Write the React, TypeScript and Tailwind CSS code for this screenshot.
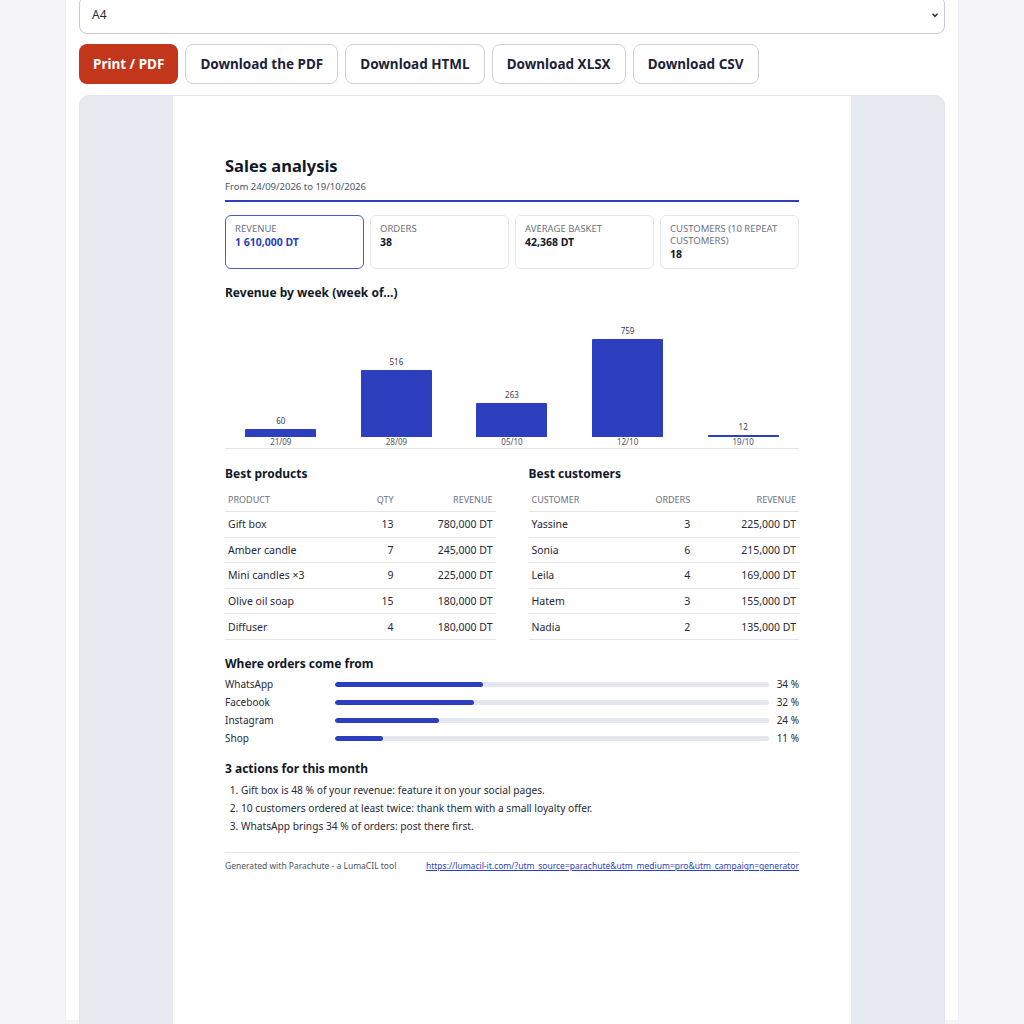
import React from "react";

const weeks = [
  { v: 60, d: "21/09" },
  { v: 516, d: "28/09" },
  { v: 263, d: "05/10" },
  { v: 759, d: "12/10" },
  { v: 12, d: "19/10" },
];

const products = [
  ["Gift box", "13", "780,000 DT"],
  ["Amber candle", "7", "245,000 DT"],
  ["Mini candles ×3", "9", "225,000 DT"],
  ["Olive oil soap", "15", "180,000 DT"],
  ["Diffuser", "4", "180,000 DT"],
];

const customers = [
  ["Yassine", "3", "225,000 DT"],
  ["Sonia", "6", "215,000 DT"],
  ["Leila", "4", "169,000 DT"],
  ["Hatem", "3", "155,000 DT"],
  ["Nadia", "2", "135,000 DT"],
];

const sources = [
  ["WhatsApp", 34],
  ["Facebook", 32],
  ["Instagram", 24],
  ["Shop", 11],
] as const;

function Table({ title, cols, rows }: { title: string; cols: string[]; rows: string[][] }) {
  return (
    <div className="flex-1">
      <h3 className="text-[12px] font-bold text-[#111827] leading-[16px]">{title}</h3>
      <table className="w-full mt-[12px] text-[10.5px] text-[#1f2937] border-collapse">
        <thead>
          <tr className="border-b border-[#e5e7eb]">
            <th className="text-left font-normal text-[9px] text-[#6b7280] uppercase px-[3px] pb-[5px] leading-[12px]">{cols[0]}</th>
            <th className="text-right font-normal text-[9px] text-[#6b7280] uppercase px-[3px] pb-[5px] leading-[12px]">{cols[1]}</th>
            <th className="text-right font-normal text-[9px] text-[#6b7280] uppercase px-[3px] pb-[5px] leading-[12px]">{cols[2]}</th>
          </tr>
        </thead>
        <tbody>
          {rows.map((r) => (
            <tr key={r[0]} className="border-b border-[#e5e7eb]">
              <td className="text-left px-[3px] h-[25.6px] leading-[14px]">{r[0]}</td>
              <td className="text-right px-[3px] h-[25.6px] leading-[14px]">{r[1]}</td>
              <td className="text-right px-[3px] h-[25.6px] leading-[14px]">{r[2]}</td>
            </tr>
          ))}
        </tbody>
      </table>
    </div>
  );
}

export default function App() {
  return (
    <div className="min-h-[1024px] bg-[#f5f5f7] font-['Noto_Sans',sans-serif] overflow-hidden h-[1024px]">
      <div className="ml-[65px] w-[894px] bg-white border-x border-[#ececf0] h-full px-[13px]">
        <div className="-mt-[4px] h-[38px] rounded-[8px] border border-[#c9c9d3] bg-white flex items-center justify-between pl-[12px] pr-[4px] text-[12px] text-[#1f2937]">
          <span>A4</span>
          <svg width="10" height="10" viewBox="0 0 10 10"><path d="M2.5 3.8 L5 6.3 L7.5 3.8" stroke="#333" strokeWidth="1.6" fill="none" /></svg>
        </div>
        <div className="flex gap-[7px] mt-[10px]">
          <button className="h-[40px] px-[14px] rounded-[8px] bg-[#c2361b] text-white text-[13.5px] font-bold">Print / PDF</button>
          {["Download the PDF", "Download HTML", "Download XLSX", "Download CSV"].map((b) => (
            <button key={b} className="h-[40px] px-[14px] rounded-[8px] bg-white border border-[#cfd0da] text-[#1c1f3a] text-[13.5px] font-bold">{b}</button>
          ))}
        </div>
        <div className="mt-[11px] rounded-[10px] bg-[#e8eaf2] border border-[#e2e4ec] flex justify-center h-[940px] overflow-hidden">
          <div className="w-[678px] bg-white px-[52px] pt-[59px]">
            <h1 className="text-[16.5px] font-bold text-[#111827] leading-[22px]">Sales analysis</h1>
            <p className="text-[9.5px] text-[#4b5563] mt-[3px] leading-[14px]">From 24/09/2026 to 19/10/2026</p>
            <div className="h-[2px] bg-[#2b3fbf] mt-[6px]" />
            <div className="grid grid-cols-4 gap-[6px] mt-[13px]">
              {[
                ["Revenue", "1 610,000 DT", true],
                ["Orders", "38", false],
                ["Average basket", "42,368 DT", false],
                ["Customers (10 repeat customers)", "18", false],
              ].map(([l, v, hi]) => (
                <div key={l as string} className={`h-[54px] rounded-[6px] border px-[9px] pt-[7px] ${hi ? "border-[#4a5bd0]" : "border-[#e5e7eb]"}`}>
                  <div className="text-[9.5px] uppercase text-[#6b7280] leading-[12px]">{l}</div>
                  <div className={`text-[10.5px] font-bold leading-[14px] ${hi ? "text-[#2b3fbf]" : "text-[#111827]"}`}>{v}</div>
                </div>
              ))}
            </div>
            <h3 className="text-[12px] font-bold text-[#111827] mt-[16px] leading-[16px]">Revenue by week (week of…)</h3>
            <div className="mt-[18px] border-b border-[#e5e7eb]">
              <div className="h-[129px] flex -mx-[2px]">
                {weeks.map((w) => (
                  <div key={w.d} className="flex-1 flex flex-col items-center justify-end pb-[1px]">
                    <div className="text-[8px] text-[#374151] leading-[10px] mb-[3px]">{w.v}</div>
                    <div className="w-[71px] bg-[#2b3fbf] rounded-t-[1px]" style={{ height: `${(w.v / 759) * 98}px`, minHeight: 2 }} />
                    <div className="text-[8px] text-[#4b5563] leading-[10px]">{w.d}</div>
                  </div>
                ))}
              </div>
            </div>
            <div className="flex gap-[33px] mt-[17px]">
              <Table title="Best products" cols={["Product", "Qty", "Revenue"]} rows={products} />
              <Table title="Best customers" cols={["Customer", "Orders", "Revenue"]} rows={customers} />
            </div>
            <h3 className="text-[12px] font-bold text-[#111827] mt-[16px] leading-[16px]">Where orders come from</h3>
            <div className="mt-[4px] flex flex-col">
              {sources.map(([n, p]) => (
                <div key={n} className="flex items-center h-[18px] text-[10px] text-[#1f2937]">
                  <div className="w-[110px]">{n}</div>
                  <div className="flex-1 h-[5px] rounded-full bg-[#e5e7ef] overflow-hidden">
                    <div className="h-full bg-[#2b3fbf] rounded-full" style={{ width: `${p}%` }} />
                  </div>
                  <div className="w-[30px] text-right">{p} %</div>
                </div>
              ))}
            </div>
            <h3 className="text-[12px] font-bold text-[#111827] mt-[13px] leading-[16px]">3 actions for this month</h3>
            <ol className="list-decimal pl-[16px] mt-[4px] text-[10.2px] text-[#1f2937] leading-[18px]">
              <li>Gift box is 48 % of your revenue: feature it on your social pages.</li>
              <li>10 customers ordered at least twice: thank them with a small loyalty offer.</li>
              <li>WhatsApp brings 34 % of orders: post there first.</li>
            </ol>
            <div className="mt-[17px] border-t border-[#e5e7eb] pt-[7px] flex justify-between text-[8.5px] leading-[12px]">
              <span className="text-[#4b5563]">Generated with Parachute - a LumaCIL tool</span>
              <a className="text-[#2b3fbf] underline">https://lumacil-it.com/?utm_source=parachute&amp;utm_medium=pro&amp;utm_campaign=generator</a>
            </div>
          </div>
        </div>
      </div>
    </div>
  );
}
